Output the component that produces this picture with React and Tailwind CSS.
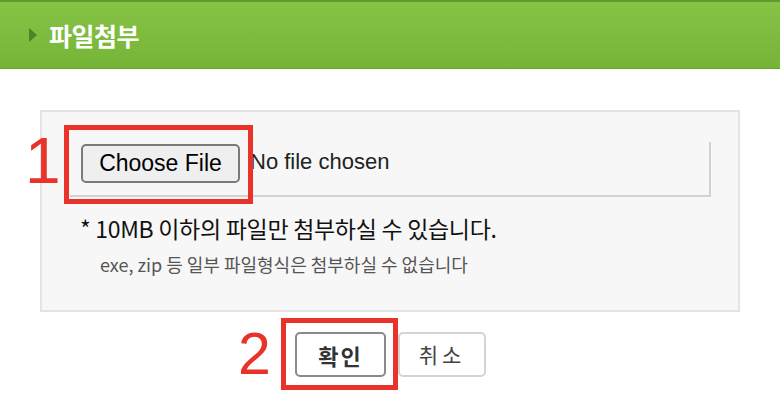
export default function App() {
  const kr = { fontFamily: '"Noto Sans CJK KR", "Noto Sans", sans-serif' };
  const sans = { fontFamily: '"Liberation Sans", Arial, sans-serif' };

  return (
    <div className="relative w-[780px] h-[400px] bg-white overflow-hidden" style={kr}>
      {/* header bar */}
      <div className="h-[69px] flex items-center border-t-2 border-[#5f9b2c] border-b border-b-[#6aa631] bg-gradient-to-b from-[#86c345] to-[#76b438]">
        <span className="ml-[29px] w-0 h-0 border-y-[7px] border-y-transparent border-l-[8px] border-l-[#4a8526]" />
        <h1 className="ml-[12px] text-[25px] font-bold text-white leading-none tracking-[-0.5px]">파일첨부</h1>
      </div>

      {/* upload panel */}
      <div className="ml-[40px] mt-[41px] w-[700px] h-[202px] border-2 border-[#e3e3e3] bg-[#f7f7f7]">
        <div className="ml-[28px] mt-[30px] w-[641px] h-[55px] border-r-2 border-b-2 border-[#d2d2d2] flex items-start">
          <button
            className="ml-[11px] mt-[2px] w-[159px] h-[39px] rounded-[5px] border-2 border-[#7a7a7a] bg-[#efefef] text-[23px] text-black leading-none"
            style={sans}
          >
            Choose File
          </button>
          <span className="ml-[10px] mt-[9px] text-[22px] text-[#222] leading-none" style={sans}>
            No file chosen
          </span>
        </div>
        <p className="ml-[38px] mt-[20px] text-[23px] text-[#111] leading-none tracking-[-0.3px]">
          * 10MB 이하의 파일만 첨부하실 수 있습니다.
        </p>
        <p className="ml-[58px] mt-[15px] text-[18px] text-[#555] leading-none tracking-[0px]">
          exe, zip 등 일부 파일형식은 첨부하실 수 없습니다
        </p>
      </div>

      {/* action buttons */}
      <div className="mt-[20px] ml-[295px] flex gap-[12px]">
        <button className="w-[91px] h-[45px] rounded-[5px] border-2 border-[#8a8a8a] bg-white text-[22px] font-bold text-[#333] tracking-[2px] leading-none">
          확인
        </button>
        <button className="w-[88px] h-[45px] rounded-[5px] border-2 border-[#d4d4d4] bg-white text-[21px] text-[#444] tracking-[4px] leading-none">
          취소
        </button>
      </div>

      {/* annotations */}
      <div className="absolute left-[64px] top-[125px] w-[189px] h-[79px] border-[5px] border-[#e8322a]" />
      <span className="absolute left-[25px] top-[129px] text-[64px] leading-none text-[#e8322a]" style={sans}>1</span>
      <div className="absolute left-[281px] top-[318px] w-[117px] h-[72px] border-[5px] border-[#e8322a]" />
      <span className="absolute left-[238px] top-[325px] text-[59px] leading-none text-[#e8322a]" style={sans}>2</span>
    </div>
  );
}
